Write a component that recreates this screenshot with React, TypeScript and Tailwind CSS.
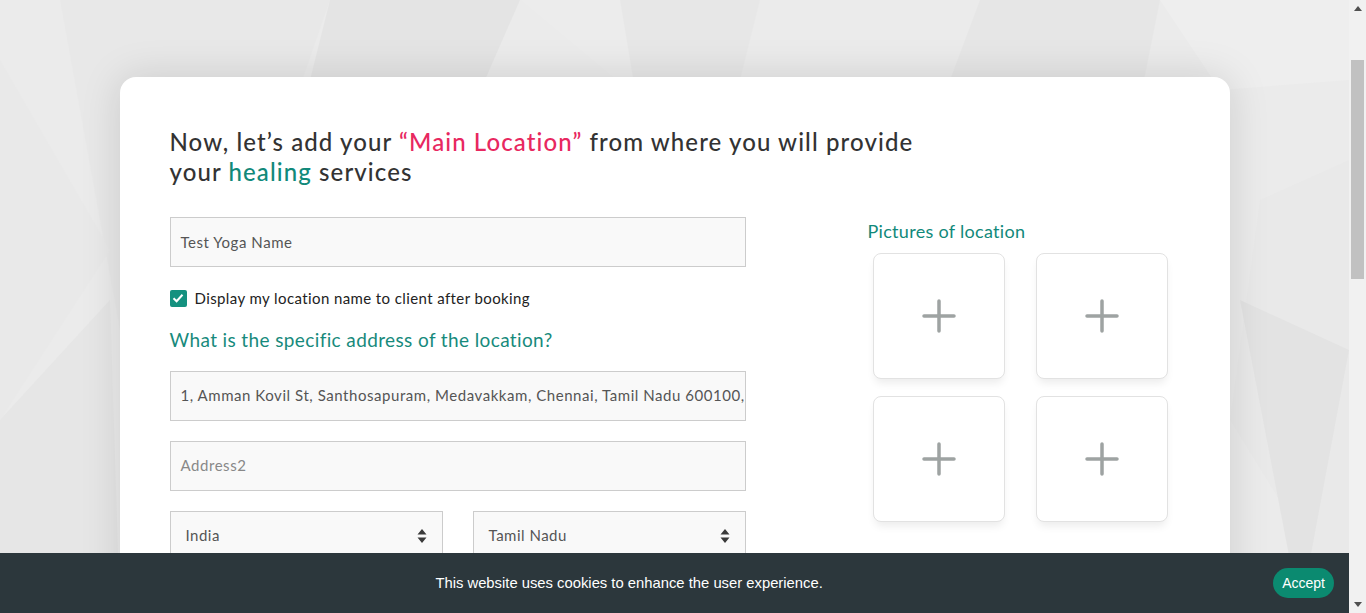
import React from "react";

const body = { fontFamily: "Lato, 'Open Sans', sans-serif" };

function PlusTile() {
	return (
		<div className="h-[126px] w-[132px] rounded-[8px] border border-[#e2e2e2] bg-white shadow-[0_6px_8px_-2px_rgba(0,0,0,0.08)] flex items-center justify-center">
			<svg width="34" height="34" viewBox="0 0 34 34">
				<path d="M17 2v30M2 17h30" stroke="#9ea3a2" strokeWidth="3.5" strokeLinecap="round" />
			</svg>
		</div>
	);
}

function SelectBox({ label }: { label: string }) {
	return (
		<div className="h-[50px] w-[273px] border border-[#cccccc] bg-[#f9f9f9] flex items-center justify-between pl-[15px] pr-[15px]">
			<span className="text-[15px] tracking-[0.5px] text-[#555]">{label}</span>
			<svg width="10" height="16" viewBox="0 0 10 16">
				<path d="M5 1L9.5 6.5H0.5Z M5 15L9.5 9.5H0.5Z" fill="#3a3a3a" />
			</svg>
		</div>
	);
}

function Input({ value, placeholder }: { value?: string; placeholder?: string }) {
	return (
		<div className="h-[50px] w-[576px] border border-[#cccccc] bg-[#f9f9f9] flex items-center px-[10px] overflow-hidden whitespace-nowrap">
			{value ? (
				<span className="text-[15px] tracking-[0.55px] text-[#555]">{value}</span>
			) : (
				<span className="text-[15px] tracking-[0.55px] text-[#888]">{placeholder}</span>
			)}
		</div>
	);
}

function Background() {
	return (
		<svg className="absolute inset-0 h-full w-full" viewBox="0 0 1349 613" preserveAspectRatio="none">
			<rect width="1349" height="613" fill="#ebebeb" />
			<polygon points="60,0 330,0 240,260 120,330" fill="#e8e8e8" />
			<polygon points="330,0 520,0 450,160 300,120" fill="#e4e4e4" />
			<polygon points="520,0 760,0 640,100" fill="#ececec" />
			<polygon points="620,0 760,0 720,160 640,120" fill="#e7e7e7" />
			<polygon points="760,0 980,0 900,150 820,120" fill="#ebebeb" />
			<polygon points="980,0 1160,0 1120,200 920,160" fill="#e6e6e6" />
			<polygon points="1160,0 1349,0 1349,80 1220,90" fill="#eeeeee" />
			<polygon points="1260,200 1349,160 1349,613 1230,420" fill="#e9e9e9" />
			<polygon points="1240,300 1349,350 1300,613" fill="#e3e3e3" />
			<polygon points="0,60 110,250 0,420" fill="#e9e9e9" />
			<polygon points="0,420 110,300 120,613 0,613" fill="#e6e6e6" />
		</svg>
	);
}

function Scrollbar() {
	return (
		<div className="w-[17px] h-full bg-[#f1f1f1] flex flex-col items-center">
			<div className="h-[17px] flex items-center justify-center">
				<svg width="8" height="5" viewBox="0 0 8 5">
					<path d="M4 0L8 5H0Z" fill="#505050" />
				</svg>
			</div>
			<div className="mt-[43px] h-[219px] w-[13px] bg-[#c1c1c1]" />
			<div className="flex-1" />
			<div className="h-[17px] flex items-center justify-center">
				<svg width="8" height="5" viewBox="0 0 8 5">
					<path d="M0 0H8L4 5Z" fill="#505050" />
				</svg>
			</div>
		</div>
	);
}

export default function App() {
	return (
		<div className="h-[613px] w-full flex overflow-hidden" style={body}>
			<div className="relative flex-1 h-full overflow-hidden">
				<Background />
				<div className="relative pt-[77px]">
					<div className="mx-auto w-[1110px] h-[600px] rounded-[16px] bg-white shadow-[0_0_40px_rgba(0,0,0,0.13)] pt-[50px] px-[50px]">
						<h1
							className="text-[24px] leading-[30px] tracking-[1.1px] text-[#333] font-medium whitespace-nowrap"
							style={{ fontFamily: "Lato, sans-serif" }}
						>
							Now, let’s add your <span className="text-[#e8285f]">“Main Location”</span> from where you will provide
							<br />
							your <span className="text-[#11897a]">healing</span> services
						</h1>
						<div className="mt-[30px] flex">
							<div className="w-[576px] flex flex-col">
								<Input value="Test Yoga Name" />
								<label className="mt-[20px] flex items-center gap-[8px]">
									<span className="h-[17px] w-[17px] rounded-[2px] bg-[#14917f] flex items-center justify-center">
										<svg width="12" height="10" viewBox="0 0 12 10">
											<path d="M1.5 5.2L4.6 8.2L10.5 1.8" stroke="white" strokeWidth="2" fill="none" />
										</svg>
									</span>
									<span className="text-[15px] tracking-[0.4px] text-[#222]">
										Display my location name to client after booking
									</span>
								</label>
								<h2 className="mt-[18px] text-[19px] leading-[24px] tracking-[0.38px] text-[#178a7c]">
									What is the specific address of the location?
								</h2>
								<div className="mt-[19px]">
									<Input value="1, Amman Kovil St, Santhosapuram, Medavakkam, Chennai, Tamil Nadu 600100," />
								</div>
								<div className="mt-[20px]">
									<Input placeholder="Address2" />
								</div>
								<div className="mt-[20px] flex justify-between">
									<SelectBox label="India" />
									<SelectBox label="Tamil Nadu" />
								</div>
							</div>
							<div className="ml-[122px] pt-[2px]">
								<h3 className="text-[18px] leading-[24px] tracking-[0.3px] text-[#11897a]">Pictures of location</h3>
								<div className="mt-[10px] ml-[5px] grid grid-cols-[132px_132px] gap-x-[31px] gap-y-[17px]">
									<PlusTile />
									<PlusTile />
									<PlusTile />
									<PlusTile />
								</div>
							</div>
						</div>
					</div>
				</div>
				<div
					className="absolute bottom-0 left-0 right-0 h-[60px] bg-[#2c373c] flex items-center pr-[15px]"
					style={{ fontFamily: "'Liberation Sans', Arial, sans-serif" }}
				>
					<p className="flex-1 text-center text-[14.8px] text-white">
						This website uses cookies to enhance the user experience.
					</p>
					<button className="ml-[15px] h-[30px] px-[9px] rounded-full bg-[#0b8a70] text-[14px] text-white">
						Accept
					</button>
				</div>
			</div>
			<Scrollbar />
		</div>
	);
}
